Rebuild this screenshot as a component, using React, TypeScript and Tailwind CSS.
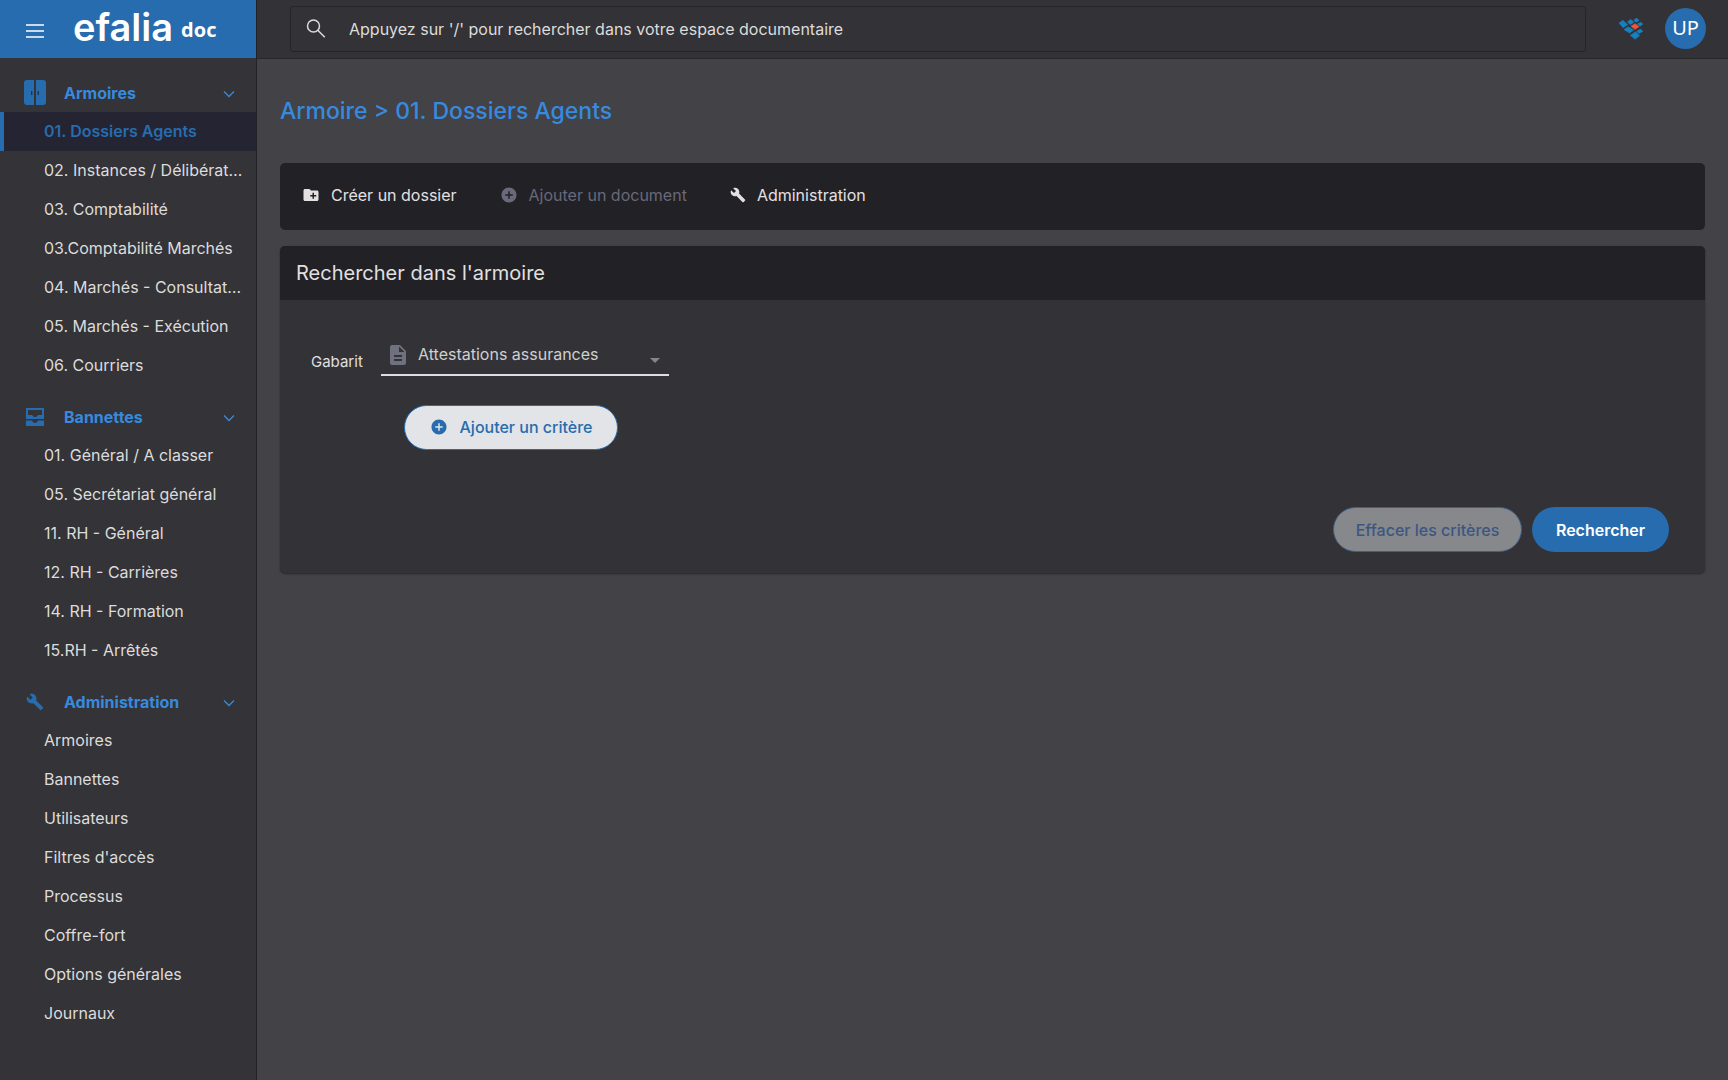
import React, { useState } from "react";
import {
  MdAddCircle,
  MdArrowDropDown,
  MdBuild,
  MdCreateNewFolder,
  MdDescription,
} from "react-icons/md";

type Section = {
  title: string;
  icon: React.ReactNode;
  items: string[];
};

function CabinetIcon() {
  return (
    <svg viewBox="0 0 22 25" className="h-[25px] w-[22px]" aria-hidden="true">
      <path d="M3 0h7v25H3a3 3 0 0 1-3-3V3a3 3 0 0 1 3-3zM12 0h7a3 3 0 0 1 3 3v19a3 3 0 0 1-3 3h-7z" fill="#276cae" />
      <path d="M7 11h1.4v4H7zM13.6 11H15v4h-1.4z" fill="#263247" />
    </svg>
  );
}

function InboxIcon() {
  return (
    <svg viewBox="0 0 18 18" className="size-[18px]" aria-hidden="true">
      <path
        fillRule="evenodd"
        d="M0 0h18v11H0zM2 2v5h4.2c.3 1.3 1.4 2 2.8 2s2.500-.7 2.800-2H16V2z"
        fill="#276cae"
      />
      <path d="M0 12.500h6.200c.2 1.500 1.300 2.300 2.800 2.300s2.600-.8 2.800-2.300H18V18H0z" fill="#276cae" />
    </svg>
  );
}

function Chevron() {
  return (
    <svg viewBox="0 0 12 8" className="mt-[3px] h-2 w-3" fill="none" stroke="#3b8ad8" strokeWidth="1.300" aria-hidden="true">
      <path d="M1 1.500l5 5 5-5" />
    </svg>
  );
}

function MenuIcon() {
  return (
    <svg viewBox="0 0 18 14" className="h-[14px] w-[18px]" stroke="#ffffff" strokeWidth="1.300" aria-hidden="true">
      <path d="M0 1h18M0 7h18M0 13h18" />
    </svg>
  );
}

function SearchIcon() {
  return (
    <svg viewBox="0 0 20 19" className="h-[19px] w-5" fill="none" stroke="#dcdcdc" strokeWidth="1.500" aria-hidden="true">
      <circle cx="7.500" cy="7" r="6" />
      <path d="M11.800 11.300l7 7" />
    </svg>
  );
}

function AppsLogo() {
  return (
    <svg viewBox="0 0 75 66" className="h-[22px] w-[25px]" aria-hidden="true">
      <g fill="#1681c0" stroke="#1681c0" strokeWidth="1.500" strokeLinejoin="round">
        <path d="M0 15L12 7l14 13-14 9z" />
        <path d="M15 35l12-9 17 10-12 9z" />
        <path d="M34 52l16-11 12 12-14 11z" />
        <path d="M25 12l10-8 10 9-11 7z" />
        <path d="M44 6L54 0l6 8-9 5z" />
        <path d="M55 18l10-5 7 5-9 7z" />
        <path d="M53 40l11-7 8 7-12 7z" />
      </g>
      <path d="M36 25l12-8 12 9-12 8z" fill="#e8583a" stroke="#e8583a" strokeWidth="2" strokeLinejoin="round" />
    </svg>
  );
}

const sections: Section[] = [
  {
    title: "Armoires",
    icon: <CabinetIcon />,
    items: [
      "01. Dossiers Agents",
      "02. Instances / Délibérat…",
      "03. Comptabilité",
      "03.Comptabilité Marchés",
      "04. Marchés - Consultat…",
      "05. Marchés - Exécution",
      "06. Courriers",
    ],
  },
  {
    title: "Bannettes",
    icon: <InboxIcon />,
    items: [
      "01. Général / A classer",
      "05. Secrétariat général",
      "11. RH - Général",
      "12. RH - Carrières",
      "14. RH - Formation",
      "15.RH - Arrêtés",
    ],
  },
  {
    title: "Administration",
    icon: <MdBuild className="size-[18px] text-[#276cae]" />,
    items: [
      "Armoires",
      "Bannettes",
      "Utilisateurs",
      "Filtres d'accès",
      "Processus",
      "Coffre-fort",
      "Options générales",
      "Journaux",
    ],
  },
];

function Sidebar() {
  return (
    <aside className="flex w-[257px] shrink-0 flex-col border-r border-[#222225] bg-[#343337]">
      <div className="flex h-[58px] items-center bg-[#276cae] pl-[26px] text-white">
        <button type="button" aria-label="Menu" className="mt-1">
          <MenuIcon />
        </button>
        <a href="#accueil" className="ml-[29px] flex items-end gap-2 pb-1">
          <span className="text-[38px] leading-none font-semibold">efalia</span>
          <span className="mb-[6px] font-['Open_Sans'] text-xl leading-none font-bold">doc</span>
        </a>
      </div>
      <nav className="flex flex-col gap-[11px] pt-[14px]">
        {sections.map((section) => (
          <section key={section.title}>
            <button type="button" className="flex h-10 w-full items-center pt-px pr-[21px] text-left">
              <span className="ml-[23px] flex w-6 justify-center">{section.icon}</span>
              <span className="ml-[17px] flex-1 text-base font-bold text-[#378ade]">{section.title}</span>
              <Chevron />
            </button>
            <ul>
              {section.items.map((item) => (
                <li key={item}>
                  <a
                    href="#dossier"
                    className={
                      item === "01. Dossiers Agents"
                        ? "block border-l-4 border-[#276cae] bg-[#252433] pl-10 text-base leading-[39px] font-semibold whitespace-nowrap text-[#276cae]"
                        : "block pl-11 text-base leading-[39px] whitespace-nowrap text-[#dcdcdc]"
                    }
                  >
                    {item}
                  </a>
                </li>
              ))}
            </ul>
          </section>
        ))}
      </nav>
    </aside>
  );
}

function TopBar() {
  return (
    <header className="flex h-[59px] items-center border-b border-[#28282b] bg-[#333236] pr-[22px] pb-px pl-[33px]">
      <label className="flex h-[46px] flex-1 items-center rounded-[3px] border border-[#252528] pl-[15px]">
        <SearchIcon />
        <input
          type="search"
          aria-label="Rechercher"
          placeholder="Appuyez sur '/' pour rechercher dans votre espace documentaire"
          className="ml-[23px] min-w-0 flex-1 bg-transparent text-base text-[#dcdcdc] outline-none placeholder:text-[#dcdcdc]"
        />
      </label>
      <button type="button" aria-label="Applications" className="ml-[33px]">
        <AppsLogo />
      </button>
      <button
        type="button"
        className="ml-[21px] flex size-[41px] items-center justify-center rounded-full bg-[#276cae] pb-[2px] font-['Noto_Sans'] text-xl text-white"
      >
        UP
      </button>
    </header>
  );
}

function Toolbar() {
  return (
    <div className="flex h-[67px] items-center gap-[43px] rounded-[5px] bg-[#222126] pb-[3px] pl-[22px] text-base text-[#e4e0e2]">
      <button type="button" className="flex items-center gap-[11px]">
        <MdCreateNewFolder className="size-[18px]" />
        Créer un dossier
      </button>
      <button type="button" disabled className="flex items-center gap-[11px] text-[#686979]">
        <MdAddCircle className="size-[18px]" />
        Ajouter un document
      </button>
      <button type="button" className="flex items-center gap-[11px]">
        <MdBuild className="size-4" />
        Administration
      </button>
    </div>
  );
}

function SearchPanel() {
  const [template, setTemplate] = useState("Attestations assurances");
  return (
    <section className="mt-4 rounded-[5px] bg-[#333237] shadow-[0_1px_2px_#28282b]">
      <h2 className="rounded-t-[5px] bg-[#222126] px-4 text-xl leading-[54px] text-[#e0e0e0]">
        Rechercher dans l'armoire
      </h2>
      <form className="pt-[35px] pr-9 pb-[21px]" onSubmit={(event) => event.preventDefault()}>
        <div className="flex items-center pl-[31px]">
          <label htmlFor="gabarit" className="mt-[14px] w-[70px] text-[15px] text-[#e0e0e0]">
            Gabarit
          </label>
          <div className="relative w-72 border-b-2 border-[#dcdfe0]">
            <MdDescription className="pointer-events-none absolute top-2 left-[5px] size-6 text-[#70717f]" />
            <select
              id="gabarit"
              value={template}
              onChange={(event) => setTemplate(event.target.value)}
              className="h-[39px] w-full appearance-none bg-transparent pb-[2px] pl-[37px] text-base text-[#cfcfcf] outline-none"
            >
              <option>Attestations assurances</option>
            </select>
            <MdArrowDropDown className="pointer-events-none absolute top-[13px] right-[2px] size-6 text-[#85868c]" />
          </div>
        </div>
        <button
          type="button"
          className="mt-[29px] ml-[124px] flex h-[45px] w-[214px] items-center justify-center gap-3 rounded-full border border-[#276cae] bg-[#e2e4e7] pb-[2px] text-base font-medium text-[#276cae]"
        >
          <MdAddCircle className="size-[18px]" />
          Ajouter un critère
        </button>
        <div className="mt-[57px] flex justify-end gap-[10px]">
          <button
            type="reset"
            disabled
            className="h-[45px] w-[189px] rounded-full border border-[#3d5f8a] bg-[#86888b] text-base font-medium text-[#3c5683]"
          >
            Effacer les critères
          </button>
          <button type="submit" className="h-[45px] w-[137px] rounded-full bg-[#276cae] text-base font-semibold text-white">
            Rechercher
          </button>
        </div>
      </form>
    </section>
  );
}

export default function App() {
  return (
    <div className="flex min-h-screen bg-[#434247] font-['Inter',sans-serif]">
      <Sidebar />
      <div className="flex min-w-0 flex-1 flex-col">
        <TopBar />
        <main className="px-[23px] pt-[34px]">
          <h1 className="mb-[34px] text-[23px] leading-9 font-medium text-[#378ade]">
            Armoire &gt; 01. Dossiers Agents
          </h1>
          <Toolbar />
          <SearchPanel />
        </main>
      </div>
    </div>
  );
}
